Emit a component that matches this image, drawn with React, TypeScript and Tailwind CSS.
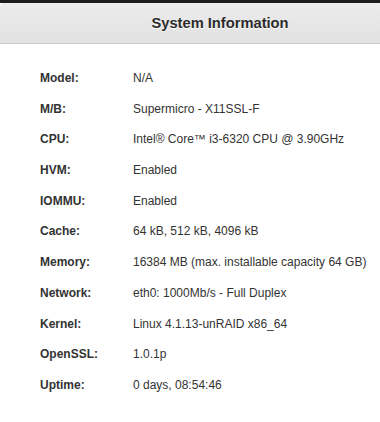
import React from 'react';

const rows: [string, string][] = [
    ['Model:', 'N/A'],
    ['M/B:', 'Supermicro - X11SSL-F'],
    ['CPU:', 'Intel® Core™ i3-6320 CPU @ 3.90GHz'],
    ['HVM:', 'Enabled'],
    ['IOMMU:', 'Enabled'],
    ['Cache:', '64 kB, 512 kB, 4096 kB'],
    ['Memory:', '16384 MB (max. installable capacity 64 GB)'],
    ['Network:', 'eth0: 1000Mb/s - Full Duplex'],
    ['Kernel:', 'Linux 4.1.13-unRAID x86_64'],
    ['OpenSSL:', '1.0.1p'],
    ['Uptime:', '0 days, 08:54:46'],
];

export default function App() {
    return (
        <div className="w-[380px] h-[422px] overflow-hidden bg-white font-['Liberation_Sans',Arial,sans-serif]">
            <div className="h-[3px] bg-[#1c1c1c]" />
            {/* Panel header */}
            <div className="w-[440px] h-[41px] flex items-center justify-center rounded-tl-[4px] border-b border-[#c8c8c8] bg-gradient-to-b from-[#ececec] to-[#e2e2e2]">
                <span className="text-[14.7px] font-bold text-[#2b2b2b] [text-shadow:0_1px_0_#fff]">System Information</span>
            </div>

            {/* Info rows */}
            <div className="pt-[27px] pl-[40px] flex flex-col">
                {rows.map(([label, value]) => (
                    <div key={label} className="flex h-[30.7px] text-[12px] leading-[15px]">
                        <span className="w-[93px] font-bold text-[#333]">{label}</span>
                        <span className="text-[#333]">{value}</span>
                    </div>
                ))}
            </div>
        </div>
    );
}
